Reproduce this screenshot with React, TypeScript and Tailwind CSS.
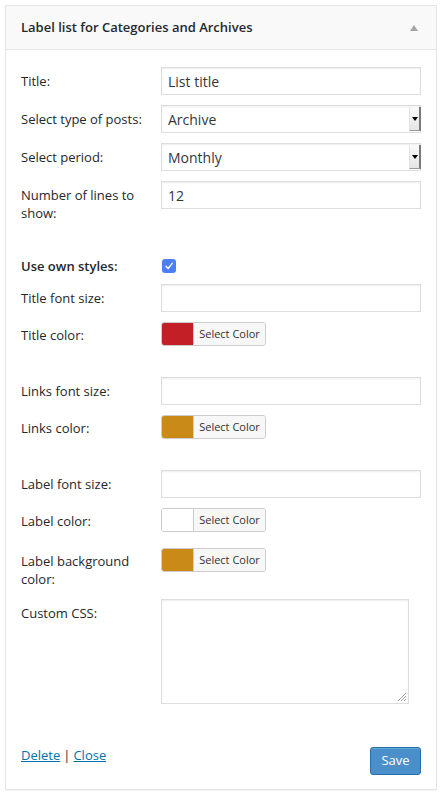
import React from 'react'

const font = { fontFamily: '"Open Sans", "Noto Sans", sans-serif' }

const Label = ({ children, className = '' }: { children: React.ReactNode; className?: string }) => (
  <div className={`w-[140px] shrink-0 text-[13px] leading-[18px] text-[#23282d] ${className}`}>{children}</div>
)

const TextInput = ({ value = '' }: { value?: string }) => (
  <div className="w-[260px] h-[28px] border border-[#dddddd] bg-white shadow-[inset_0_1px_2px_rgba(0,0,0,0.07)] pl-[6px] flex items-center text-[14px] text-[#32373c]">
    {value}
  </div>
)

const Select = ({ value }: { value: string }) => (
  <div className="w-[260px] h-[28px] border border-[#dddddd] bg-white shadow-[inset_0_1px_2px_rgba(0,0,0,0.07)] pl-[6px] flex items-center text-[14px] text-[#32373c]">
    <span className="flex-1">{value}</span>
    <div className="h-[24px] w-[12px] mr-[-1px] flex items-center justify-center bg-gradient-to-b from-[#fafafa] to-[#e6e6e6] border-l border-[#e3e3e3] border-r-2 border-r-[#7a7a7a] border-b border-b-[#9a9a9a]">
      <div className="w-0 h-0 border-l-[3px] border-r-[3px] border-t-[4px] border-l-transparent border-r-transparent border-t-black" />
    </div>
  </div>
)

const ColorPicker = ({ color }: { color: string }) => (
  <div className="h-[24px] w-[105px] flex border border-[#cccccc] rounded-[3px] overflow-hidden">
    <div className="w-[31px] h-full" style={{ background: color }} />
    <div className="flex-1 bg-[#f7f7f7] border-l border-[#cccccc] flex items-center justify-center text-[11px] text-[#333333]">
      Select Color
    </div>
  </div>
)

export default function App() {
  return (
    <div className="bg-white min-h-[795px] pt-[5px] pl-[5px]" style={font}>
      <div className="w-[432px] h-[785px] border border-[#e5e5e5] bg-white shadow-[0_1px_1px_rgba(0,0,0,0.04)] flex flex-col">
        <div className="h-[44px] bg-[#f9f9f9] border-b border-[#e5e5e5] flex items-center justify-between pl-[15px] pr-[18px]">
          <span className="text-[13px] font-semibold text-[#23282d] pt-[1px]">Label list for Categories and Archives</span>
          <div className="w-0 h-0 border-l-[4px] border-r-[4px] border-b-[6px] border-l-transparent border-r-transparent border-b-[#a0a5aa]" />
        </div>

        <div className="flex flex-col px-[15px] pt-[17px]">
          <div className="flex items-start">
            <Label className="pt-[5px]">Title:</Label>
            <TextInput value="List title" />
          </div>
          <div className="flex items-start mt-[10px]">
            <Label className="pt-[5px]">Select type of posts:</Label>
            <Select value="Archive" />
          </div>
          <div className="flex items-start mt-[10px]">
            <Label className="pt-[5px]">Select period:</Label>
            <Select value="Monthly" />
          </div>
          <div className="flex items-start mt-[10px] h-[41px]">
            <Label className="pt-[5px] pr-[20px]">Number of lines to show:</Label>
            <TextInput value="12" />
          </div>

          <div className="flex items-center mt-[30px] h-[28px]">
            <Label className="font-semibold">Use own styles:</Label>
            <div className="ml-[1px] w-[14px] h-[14px] rounded-[3px] bg-[#4b7ff5] flex items-center justify-center">
              <svg width="10" height="10" viewBox="0 0 10 10">
                <path d="M2 5.2 L4.2 7.5 L8.2 2.3" fill="none" stroke="white" strokeWidth="1.3" strokeLinecap="round" strokeLinejoin="round" />
              </svg>
            </div>
          </div>
          <div className="flex items-start mt-[4px]">
            <Label className="pt-[5px]">Title font size:</Label>
            <TextInput />
          </div>
          <div className="flex items-center mt-[10px]">
            <Label className="pt-[2px]">Title color:</Label>
            <ColorPicker color="#c22026" />
          </div>

          <div className="flex items-start mt-[31px]">
            <Label className="pt-[5px]">Links font size:</Label>
            <TextInput />
          </div>
          <div className="flex items-center mt-[10px]">
            <Label className="pt-[2px]">Links color:</Label>
            <ColorPicker color="#c98a17" />
          </div>

          <div className="flex items-start mt-[31px]">
            <Label className="pt-[5px]">Label font size:</Label>
            <TextInput />
          </div>
          <div className="flex items-center mt-[10px]">
            <Label className="pt-[2px]">Label color:</Label>
            <ColorPicker color="#ffffff" />
          </div>
          <div className="flex items-start mt-[16px] h-[41px]">
            <Label className="pt-[4px] pr-[20px]">Label background color:</Label>
            <ColorPicker color="#c98a17" />
          </div>
          <div className="flex items-start mt-[10px]">
            <Label className="pt-[5px]">Custom CSS:</Label>
            <div className="relative w-[248px] h-[105px] border border-[#dddddd] bg-white shadow-[inset_0_1px_2px_rgba(0,0,0,0.07)]">
              <svg className="absolute right-[1px] bottom-[1px]" width="11" height="11" viewBox="0 0 11 11">
                <path d="M10 2 L2 10 M10 5 L5 10 M10 8 L8 10" stroke="#a0a0a0" strokeWidth="1" />
              </svg>
            </div>
          </div>

          <div className="flex items-start justify-between mt-[42px]">
            <div className="text-[13px] leading-[18px] text-[#23282d]">
              <a href="#" className="text-[#0073aa] underline">Delete</a>
              <span className="mx-[3px]">|</span>
              <a href="#" className="text-[#0073aa] underline">Close</a>
            </div>
            <button className="mt-[1px] h-[28px] w-[51px] rounded-[3px] bg-[#4a8fca] border border-[#2b6fa8] text-white text-[13px] shadow-[inset_0_1px_0_rgba(120,200,230,0.5)]">
              Save
            </button>
          </div>
        </div>
      </div>
    </div>
  )
}
